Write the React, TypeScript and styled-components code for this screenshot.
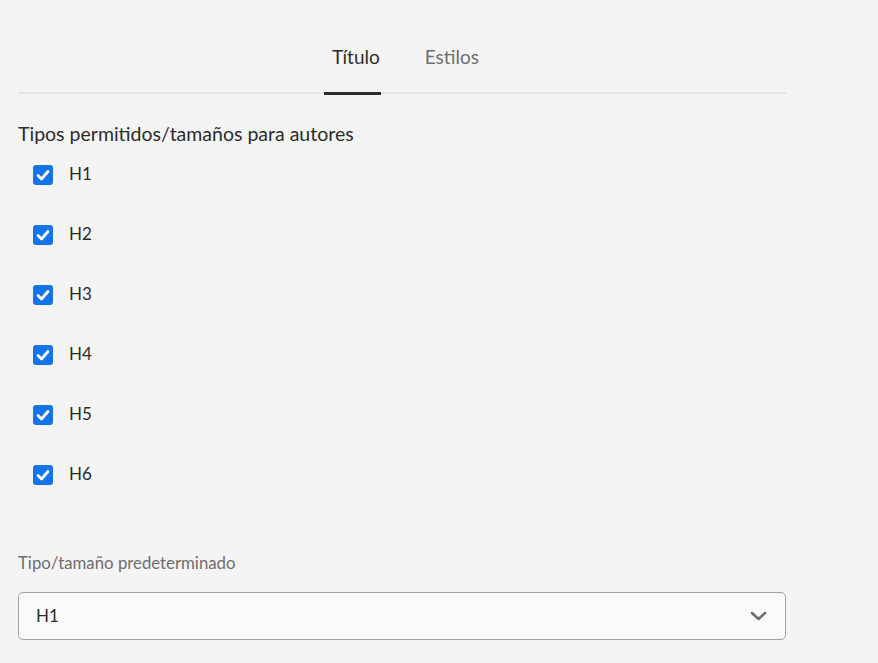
import React, { useState } from "react";
import styled, { createGlobalStyle } from "styled-components";

const GlobalStyle = createGlobalStyle`
  html, body {
    margin: 0;
    padding: 0;
    background: #f4f4f4;
  }
  body {
    font-family: Lato, "Open Sans", sans-serif;
    color: #2c2c2c;
    -webkit-font-smoothing: antialiased;
  }
`;

const Panel = styled.div`
  width: 768px;
  margin-left: 18px;
  padding-bottom: 23px;
`;

const TabList = styled.div`
  display: flex;
  justify-content: center;
  gap: 36px;
  border-bottom: 2px solid #e6e6e6;
`;

const Tab = styled.button<{ $active?: boolean }>`
  appearance: none;
  background: none;
  border: 0;
  border-bottom: 3px solid ${(p) => (p.$active ? "#2c2c2c" : "transparent")};
  margin: 0 0 -3px 0;
  padding: 45px 1px 23px 8px;
  font-family: Lato, "Open Sans", sans-serif;
  font-size: 19px;
  line-height: 24px;
  color: ${(p) => (p.$active ? "#2c2c2c" : "#6e6e6e")};
  cursor: pointer;
`;

const GroupLabel = styled.div`
  margin-top: 29px;
  font-size: 19.5px;
  line-height: 22px;
  color: #2c2c2c;
`;

const CheckList = styled.div`
  display: flex;
  flex-direction: column;
`;

const CheckRow = styled.label`
  display: flex;
  align-items: center;
  height: 60px;
  padding-left: 15px;
  gap: 16px;
  cursor: pointer;
`;

const Box = styled.span<{ $checked: boolean }>`
  width: 20px;
  height: 20px;
  border-radius: 3px;
  box-sizing: border-box;
  background: ${(p) => (p.$checked ? "#1473e6" : "transparent")};
  border: ${(p) => (p.$checked ? "none" : "2px solid #6e6e6e")};
  display: flex;
  align-items: center;
  justify-content: center;
  flex: none;
`;

const RowText = styled.span`
  font-size: 17px;
  line-height: 20px;
  color: #2c2c2c;
  margin-top: -2px;
`;

const FieldLabel = styled.div`
  margin-top: 48px;
  font-size: 16.8px;
  line-height: 20px;
  color: #6e6e6e;
`;

const Select = styled.div`
  margin-top: 19px;
  height: 48px;
  box-sizing: border-box;
  border: 1px solid #a2a2a2;
  border-radius: 5px;
  background: #fafafa;
  display: flex;
  align-items: center;
  justify-content: space-between;
  padding: 0 18px 0 17px;
`;

const SelectValue = styled.span`
  font-size: 17px;
  line-height: 20px;
  color: #2c2c2c;
`;

const Check = () => (
  <svg width="14" height="12" viewBox="0 0 14 12">
    <polyline
      points="2,6.5 5.5,10 12,2.5"
      fill="none"
      stroke="#fff"
      strokeWidth="2.8"
      strokeLinecap="round"
      strokeLinejoin="round"
    />
  </svg>
);

const Chevron = () => (
  <svg width="17" height="10" viewBox="0 0 17 10">
    <polyline
      points="2,2 8.5,8 15,2"
      fill="none"
      stroke="#6e6e6e"
      strokeWidth="2.6"
      strokeLinecap="round"
      strokeLinejoin="round"
    />
  </svg>
);

const sizes = ["H1", "H2", "H3", "H4", "H5", "H6"];

export default function App() {
  const [tab, setTab] = useState(0);
  const [checked, setChecked] = useState<boolean[]>(sizes.map(() => true));

  return (
    <>
      <GlobalStyle />
      <Panel>
        <TabList>
          <Tab $active={tab === 0} onClick={() => setTab(0)}>
            Título
          </Tab>
          <Tab $active={tab === 1} onClick={() => setTab(1)}>
            Estilos
          </Tab>
        </TabList>

        <GroupLabel>Tipos permitidos/tamaños para autores</GroupLabel>
        <CheckList>
          {sizes.map((s, i) => (
            <CheckRow
              key={s}
              onClick={() =>
                setChecked((c) => c.map((v, j) => (j === i ? !v : v)))
              }
            >
              <Box $checked={checked[i]}>{checked[i] && <Check />}</Box>
              <RowText>{s}</RowText>
            </CheckRow>
          ))}
        </CheckList>

        <FieldLabel>Tipo/tamaño predeterminado</FieldLabel>
        <Select>
          <SelectValue>H1</SelectValue>
          <Chevron />
        </Select>
      </Panel>
    </>
  );
}
